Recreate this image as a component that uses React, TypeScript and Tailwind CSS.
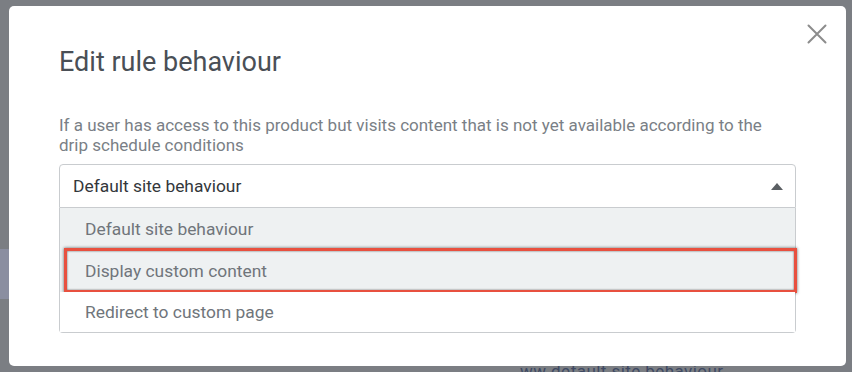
import React from 'react';

const options = ['Default site behaviour', 'Display custom content', 'Redirect to custom page'];

const CloseIcon = () => (
  <svg width="20" height="20" viewBox="0 0 20 20" fill="none" stroke="#8c8c8c" strokeWidth="2" strokeLinecap="round">
    <path d="M1.5 1.5 L18.5 18.5 M18.5 1.5 L1.5 18.5" />
  </svg>
);

export default function App() {
  return (
    <div className="relative w-[852px] h-[372px] overflow-hidden bg-[#7b7e83] pt-[6px] pl-[9px] font-['Roboto',sans-serif]">
      {/* dimmed page behind the modal */}
      <div className="absolute left-0 top-[249px] w-[9px] h-[50px] bg-[#8a8ea0]" />
      <div className="absolute left-[520px] top-[363px] text-[17px] leading-none text-[#3f4a63] tracking-wide">
        ww default site behaviour
      </div>

      <div className="relative w-[837px] h-[360px] rounded-[5px] bg-white px-[50px] pt-[40px]">
        <button className="absolute right-[19px] top-[18px]">
          <CloseIcon />
        </button>

        <h2 className="text-[27px] leading-[32px] text-[#4a4f56]">Edit rule behaviour</h2>

        <p className="mt-[37px] text-[17px] leading-[20px] text-[#7a7f86] w-[720px]">
          If a user has access to this product but visits content that is not yet available according to the drip
          schedule conditions
        </p>

        <div className="mt-[9px] w-[737px] text-[17.4px]">
          <div className="flex items-center justify-between h-[44px] pl-[13px] pr-[12px] border border-[#c9cccf] rounded-t-[4px] text-[#33373b]">
            <span>Default site behaviour</span>
            <svg width="12" height="7" viewBox="0 0 12 7">
              <path d="M6 0 L12 7 L0 7 Z" fill="#5b5f63" />
            </svg>
          </div>
          <ul className="flex flex-col border border-t-0 border-[#c9cccf] rounded-b-[4px] text-[#70757b]">
            {options.map((o, i) => (
              <li
                key={o}
                className={`relative flex items-center pl-[25px] ${i < 2 ? 'h-[42px] bg-[#eef1f2]' : 'h-[40px] bg-white'}`}
              >
                {o}
                {i === 1 && (
                  <span className="absolute left-[4px] -right-[2px] -top-[2px] -bottom-[1px] border-[3px] border-[#e8503f] shadow-[0_0_3px_rgba(0,0,0,0.6),inset_0_0_2px_rgba(0,0,0,0.65)]" />
                )}
              </li>
            ))}
          </ul>
        </div>
      </div>
    </div>
  );
}
